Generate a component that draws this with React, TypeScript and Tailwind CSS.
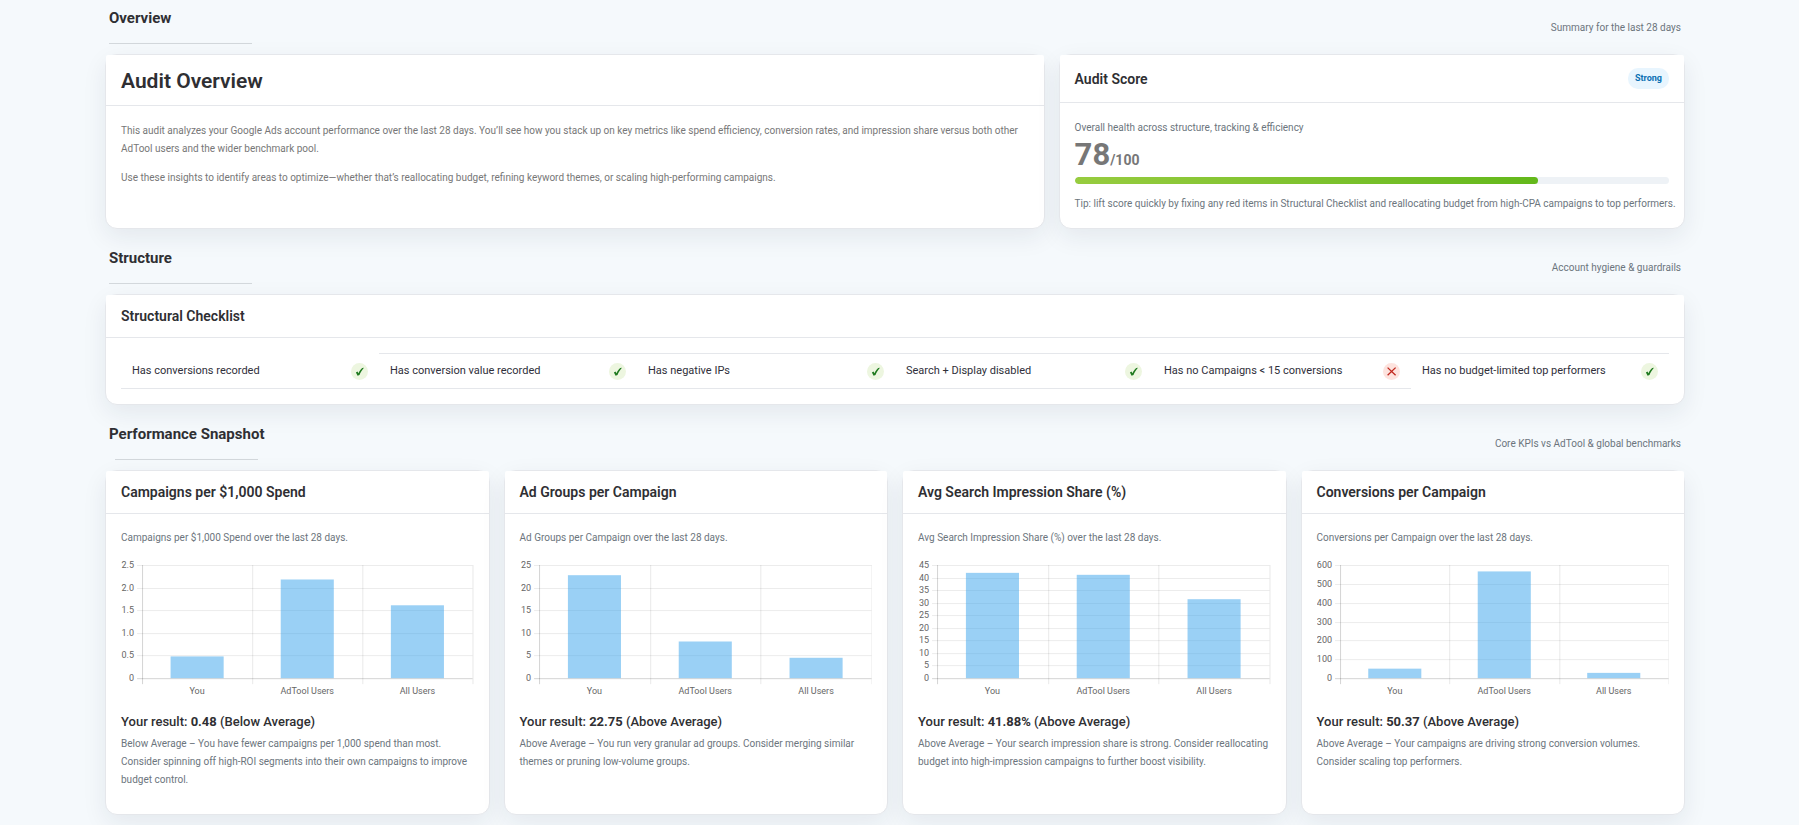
import type { ReactNode } from 'react'

type Metric = {
  title: string
  result: string
  verdict: string
  note: string
  max: number
  step: number
  decimals?: number
  axisX: number
  values: number[]
}

const CHECKS = [
  { label: 'Has conversions recorded', ok: true },
  { label: 'Has conversion value recorded', ok: true },
  { label: 'Has negative IPs', ok: true },
  { label: 'Search + Display disabled', ok: true },
  { label: 'Has no Campaigns < 15 conversions', ok: false },
  { label: 'Has no budget-limited top performers', ok: true },
]

const GROUPS = ['You', 'AdTool Users', 'All Users']

const METRICS: Metric[] = [
  {
    title: 'Campaigns per $1,000 Spend',
    result: '0.48',
    verdict: 'Below Average',
    note: 'You have fewer campaigns per 1,000 spend than most. Consider spinning off high-ROI segments into their own campaigns to improve budget control.',
    max: 2.5, step: 0.5, decimals: 1, axisX: 21, values: [0.48, 2.18, 1.61],
  },
  {
    title: 'Ad Groups per Campaign',
    result: '22.75',
    verdict: 'Above Average',
    note: 'You run very granular ad groups. Consider merging similar themes or pruning low-volume groups.',
    max: 25, step: 5, axisX: 19, values: [22.75, 8.1, 4.5],
  },
  {
    title: 'Avg Search Impression Share (%)',
    result: '41.88%',
    verdict: 'Above Average',
    note: 'Your search impression share is strong. Consider reallocating budget into high-impression campaigns to further boost visibility.',
    max: 45, step: 5, axisX: 19, values: [41.88, 41.1, 31.4],
  },
  {
    title: 'Conversions per Campaign',
    result: '50.37',
    verdict: 'Above Average',
    note: 'Your campaigns are driving strong conversion volumes. Consider scaling top performers.',
    max: 600, step: 100, axisX: 23, values: [50.37, 566, 28],
  },
]

const SCORE = 78

function Section({ title, caption, children }: { title: string; caption: string; children: ReactNode }) {
  return (
    <section>
      <div className="mb-[10px] flex items-end justify-between px-1">
        <div className="flex flex-col items-center">
          <h2 className="self-start text-[15px] leading-[21px] font-bold text-[#2f2f33]">{title}</h2>
          <div className="mt-[14px] h-px w-[143px] bg-[#d3d8dc]" />
        </div>
        <p className="pb-[7px] text-[10px] leading-[18px] text-[#6c757d]">{caption}</p>
      </div>
      {children}
    </section>
  )
}

function Card({ header, children }: { header: ReactNode; children: ReactNode }) {
  return (
    <div className="rounded-xl border border-[#e5e7eb] bg-white shadow-[0_8px_24px_rgba(30,41,59,0.08)]">
      <div className="flex items-center justify-between rounded-t-xs border-b border-[#e5e7eb] bg-white px-[15px] py-[10px]">
        {header}
      </div>
      <div className="p-[15px]">{children}</div>
    </div>
  )
}

function CardTitle({ children }: { children: ReactNode }) {
  return <h3 className="text-[14px] leading-[22px] font-semibold text-[#2f2f33]">{children}</h3>
}

function StatusIcon({ ok }: { ok: boolean }) {
  return ok ? (
    <svg viewBox="0 0 17 17" className="size-[17px] shrink-0" role="img" aria-label="Passed">
      <circle cx="8.5" cy="8.5" r="8.5" fill="#edf6e0" />
      <path d="M4.9 9.4 6.5 8.6 7.5 10.2C8.5 8 9.8 6.3 11.2 5.1L13 4.8C11 6.9 9.5 9.3 8.5 12L6.6 12.7Z" fill="#1f7a1f" />
    </svg>
  ) : (
    <svg viewBox="0 0 17 17" className="size-[17px] shrink-0" role="img" aria-label="Failed">
      <circle cx="8.5" cy="8.5" r="8.5" fill="#fde3de" />
      <path d="M4.6 4.6 12.6 12.2M12.6 4.6 4.6 12.2" stroke="#c0271d" strokeWidth="1.3" fill="none" />
    </svg>
  )
}

function BarChart({ metric }: { metric: Metric }) {
  const { max, step, decimals = 0, axisX, values } = metric
  const top = 8
  const bottom = 121
  const right = 351
  const groupWidth = (right - axisX) / GROUPS.length
  const barWidth = 53
  const ticks = Array.from({ length: Math.round(max / step) + 1 }, (_, i) => i * step)
  const y = (v: number) => bottom - (v / max) * (bottom - top)

  return (
    <svg viewBox="0 0 352 142" className="mt-[10px] block h-auto w-full" role="img" aria-label={metric.title}>
      {ticks.map((t) => (
        <g key={t}>
          <rect x={axisX - 5} y={Math.round(y(t))} width={right - axisX + 5} height="1" fill="#000" fillOpacity={t === 0 ? 0.17 : 0.08} />
          <text x={axisX - 8} y={Math.round(y(t)) + 3} textAnchor="end" fontSize="9" fill="#666">
            {t === 0 ? '0' : t.toFixed(decimals)}
          </text>
        </g>
      ))}
      {[0, 1, 2, 3].map((i) => (
        <rect key={i} x={Math.round(axisX + i * groupWidth)} y={top} width="1" height={bottom - top + 6} fill="#000" fillOpacity={i === 0 ? 0.17 : 0.09} />
      ))}
      {GROUPS.map((g, i) => {
        const cx = axisX + (i + 0.5) * groupWidth
        return (
          <g key={g}>
            <rect x={cx - barWidth / 2} y={y(values[i])} width={barWidth} height={bottom - y(values[i])} fill="#36a2eb" fillOpacity="0.5" />
            <text x={cx} y={bottom + 16} textAnchor="middle" fontSize="9" fill="#666">{g}</text>
          </g>
        )
      })}
    </svg>
  )
}

export default function App() {
  return (
    <main className="flex min-h-screen flex-col gap-[19px] bg-[#f5f9fc] pt-2 pr-[114px] pb-[9px] pl-[105px] font-[Roboto,sans-serif]">
      <Section title="Overview" caption="Summary for the last 28 days">
        <div className="grid grid-cols-[minmax(0,3fr)_minmax(0,2fr)] gap-[14px]">
          <Card header={<h1 className="pt-[2px] text-[21px] leading-7 font-semibold text-[#2f2f33]">Audit Overview</h1>}>
            <div className="flex flex-col gap-[11px] pt-px text-[10px] leading-[18px] text-[#777]">
              <p>
                This audit analyzes your Google Ads account performance over the last 28 days. You’ll see how you stack up on key metrics like
                spend efficiency, conversion rates, and impression share versus both other AdTool users and the wider benchmark pool.
              </p>
              <p>
                Use these insights to identify areas to optimize—whether that’s reallocating budget, refining keyword themes, or scaling
                high-performing campaigns.
              </p>
            </div>
          </Card>
          <Card
            header={
              <>
                <CardTitle>Audit Score</CardTitle>
                <span className="my-[3px] rounded-[10px] bg-[#e8f5fe] px-[7px] text-[9px] leading-[21px] font-bold text-[#0b6fb3]">Strong</span>
              </>
            }
          >
            <p className="pt-px text-[10px] leading-[18px] text-[#6c757d]">Overall health across structure, tracking &amp; efficiency</p>
            <p className="text-[31px] leading-9 font-bold text-[#777]">
              {SCORE}<span className="text-[14px] leading-none">/100</span>
            </p>
            <div className="mt-1 h-[7px] overflow-hidden rounded-full bg-[#eef2f6]">
              <div className="h-full rounded-full bg-linear-to-r from-[#97cc3f] to-[#63b81a]" style={{ width: `${SCORE}%` }} />
            </div>
            <p className="mt-[11px] text-[10px] leading-[18px] text-[#6c757d] 2xl:whitespace-nowrap">
              Tip: lift score quickly by fixing any red items in Structural Checklist and reallocating budget from high-CPA campaigns to top performers.
            </p>
          </Card>
        </div>
      </Section>

      <Section title="Structure" caption="Account hygiene & guardrails">
        <Card header={<CardTitle>Structural Checklist</CardTitle>}>
          <ul className="grid grid-cols-6">
            {CHECKS.map((c) => (
              <li
                key={c.label}
                className="flex h-9 items-center justify-between border-y border-[#e5e7eb] px-[11px] text-[11px] leading-[18px] text-[#2f2f3a] first:border-t-transparent last:border-b-transparent"
              >
                {c.label}
                <StatusIcon ok={c.ok} />
              </li>
            ))}
          </ul>
        </Card>
      </Section>

      <Section title="Performance Snapshot" caption="Core KPIs vs AdTool & global benchmarks">
        <div className="grid grid-cols-4 gap-[14px]">
          {METRICS.map((m) => (
            <Card key={m.title} header={<CardTitle>{m.title}</CardTitle>}>
              <p className="text-[10px] leading-[18px] text-[#6c757d]">{`${m.title} over the last 28 days.`}</p>
              <BarChart metric={m} />
              <p className="mt-3 text-[13px] leading-[22px] font-medium text-[#2f2f33]">
                Your result: <strong className="font-bold">{m.result}</strong> {`(${m.verdict})`}
              </p>
              <p className="mt-[2px] mb-[10px] text-[10px] leading-[18px] text-[#6c757d]">{`${m.verdict} – ${m.note}`}</p>
            </Card>
          ))}
        </div>
      </Section>
    </main>
  )
}
